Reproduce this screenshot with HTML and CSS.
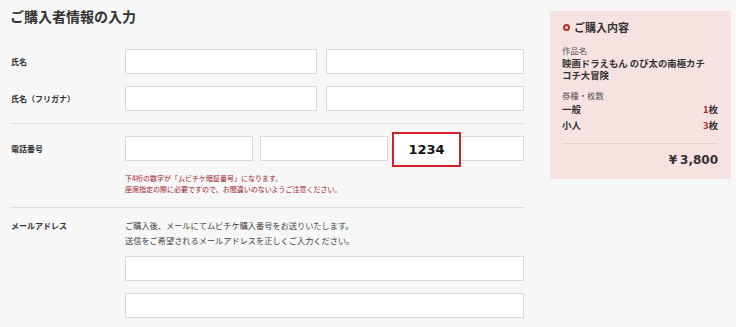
FILE: index.html
```html
<!DOCTYPE html>
<html lang="ja">
<head>
<meta charset="utf-8">
<title>ご購入者情報の入力</title>
<link rel="stylesheet" href="styles.css">
</head>
<body>
<div class="page">
  <main class="form">
    <h1 class="title">ご購入者情報の入力</h1>

    <section class="sec sec-name">
      <div class="row">
        <div class="label">氏名</div>
        <div class="fields two"><input class="input" type="text"><input class="input" type="text"></div>
      </div>
      <div class="row">
        <div class="label">氏名（フリガナ）</div>
        <div class="fields two"><input class="input" type="text"><input class="input" type="text"></div>
      </div>
    </section>

    <section class="sec sec-tel">
      <div class="row">
        <div class="label">電話番号</div>
        <div class="fields three">
          <input class="input" type="text">
          <input class="input" type="text">
          <div class="tel-last">
            <input class="input" type="text">
            <span class="pin">1234</span>
          </div>
        </div>
      </div>
      <div class="row">
        <div class="label"></div>
        <p class="note">下4桁の数字が「ムビチケ暗証番号」になります。<br>座席指定の際に必要ですので、お間違いのないようご注意ください。</p>
      </div>
    </section>

    <section class="sec sec-mail">
      <div class="row top">
        <div class="label">メールアドレス</div>
        <div class="mail-body">
          <p class="desc">ご購入後、メールにてムビチケ購入番号をお送りいたします。<br>送信をご希望されるメールアドレスを正しくご入力ください。</p>
          <input class="input wide" type="text">
          <input class="input wide" type="text">
        </div>
      </div>
    </section>
  </main>

  <aside class="summary">
    <h2 class="sum-head"><span class="ring"></span>ご購入内容</h2>
    <p class="sum-cap">作品名</p>
    <p class="sum-title">映画ドラえもん のび太の南極カチコチ大冒険</p>
    <p class="sum-cap cap2">券種・枚数</p>
    <div class="sum-row"><span>一般</span><span><em>1</em>枚</span></div>
    <div class="sum-row"><span>小人</span><span><em>3</em>枚</span></div>
    <div class="sum-total"><span class="yen">¥</span>3,800</div>
  </aside>
</div>
</body>
</html>
```

FILE: styles.css
```css
* { box-sizing: border-box; }
html, body { margin: 0; padding: 0; }
body {
  background: #f7f7f7;
  color: #333;
  font-family: "Noto Sans CJK JP", "Noto Sans", sans-serif;
  width: 736px;
  height: 327px;
  overflow: hidden;
}
p, h1, h2 { margin: 0; }

.page {
  display: flex;
  gap: 26px;
  padding-left: 10px;
}

.form { width: 514px; }

.title {
  font-size: 14px;
  font-weight: 700;
  line-height: 32px;
  height: 32px;
  color: #333;
}

.sec { border-bottom: 1px solid #dedede; }
.sec-name { padding: 17px 0 12px; display: flex; flex-direction: column; gap: 12px; }
.sec-tel { padding: 12px 0 12px; }
.sec-mail { border-bottom: none; padding-top: 10px; }

.row { display: grid; grid-template-columns: 115px 1fr; align-items: center; }
.row.top { align-items: start; }

.label {
  font-size: 8px;
  font-weight: 700;
  padding-left: 1px;
  color: #333;
  line-height: 15px;
}

.input {
  display: block;
  height: 25px;
  margin: 0;
  border: 1px solid #d9d9d9;
  background: #fff;
  border-radius: 0;
  padding: 0;
  outline: none;
}

.fields { display: grid; }
.fields.two { grid-template-columns: 192px 198px; gap: 9px; }
.fields.three { grid-template-columns: 128px 128px 129px; gap: 7px; }
.fields .input { width: 100%; }

.tel-last { position: relative; }
.pin {
  position: absolute;
  left: -3px;
  top: -4px;
  width: 69px;
  height: 35px;
  border: 2px solid #d8202a;
  background: #fff;
  display: flex;
  align-items: center;
  justify-content: center;
  font-family: "DejaVu Sans", sans-serif;
  font-weight: 700;
  font-size: 13px;
  color: #111;
}

.note {
  margin-top: 12px;
  font-size: 7px;
  line-height: 11px;
  color: #a3202e;
}

.desc {
  font-size: 8.2px;
  line-height: 15px;
  color: #444;
}
.mail-body .input.wide { width: 399px; }
.mail-body .input.wide:first-of-type { margin-top: 8px; }
.mail-body .input.wide + .input.wide { margin-top: 12px; }

/* summary */
.summary {
  width: 181px;
  height: 168px;
  margin-top: 11px;
  background: #f7e2e2;
  padding: 9px 13px 9px 12px;
}
.sum-head {
  display: flex;
  align-items: center;
  gap: 4px;
  font-size: 11px;
  font-weight: 700;
  line-height: 15px;
  color: #333;
}
.ring {
  width: 7px;
  height: 7px;
  border: 2px solid #c1272d;
  border-radius: 50%;
  margin-left: 1px;
}
.sum-cap {
  margin-top: 9px;
  font-size: 8.4px;
  line-height: 12px;
  color: #555;
}
.sum-title {
  margin-top: 2px;
  max-width: 150px;
  font-size: 9.4px;
  font-weight: 700;
  line-height: 11.5px;
}
.sum-cap.cap2 { margin-top: 8px; }
.sum-row {
  display: flex;
  justify-content: space-between;
  font-size: 9.5px;
  font-weight: 700;
  line-height: 16px;
}
.sum-row em { font-style: normal; color: #c1272d; }
.sum-total {
  margin-top: 10px;
  border-top: 1px solid #e6cccc;
  padding-top: 6px;
  text-align: right;
  font-family: "DejaVu Sans", sans-serif;
  font-weight: 700;
  font-size: 12px;
  line-height: 20px;
  color: #333;
}
.yen { margin-right: 3px; }
```
